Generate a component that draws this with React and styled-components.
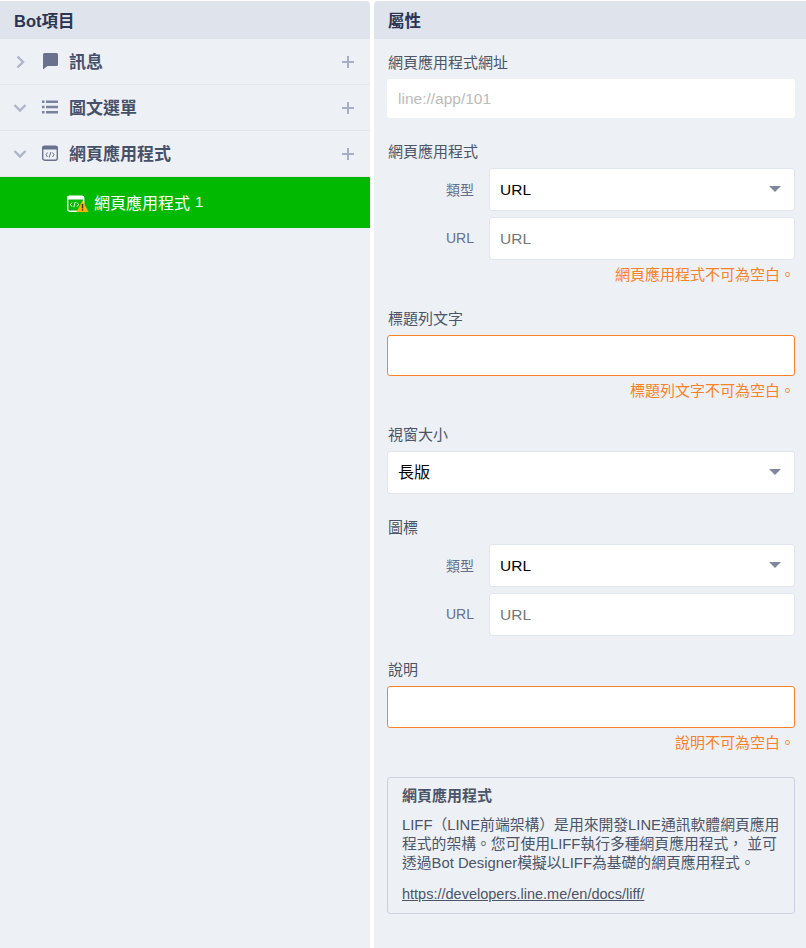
import React from "react";
import styled, { createGlobalStyle } from "styled-components";

const Global = createGlobalStyle`
  html, body { margin: 0; padding: 0; background: #fff; }
  body { font-family: "Liberation Sans", "Noto Sans CJK TC", sans-serif; }
  * { box-sizing: border-box; }
`;
const Page = styled.div`
  width: 806px; height: 948px; display: grid; grid-template-columns: 370px 432px; column-gap: 4px;
  padding-top: 1px; overflow: hidden; background: #fff;
`;
const Panel = styled.section`
  background: #edf1f5; height: 947px; overflow: hidden;
  border-radius: ${p => (p.$right ? "4px 0 0 0" : "0 4px 0 0")};
`;
const PanelHeader = styled.header`
  height: 38px; background: #dfe3ec; color: #2b3551; font-size: 16.5px; font-weight: 700;
  line-height: 41px; padding-left: 14px;
`;
const TreeRow = styled.div`
  height: 46px; border-bottom: 1px solid #e3e7ee; display: flex; align-items: center; padding: 0 15px 0 12px;
`;
const Caret = styled.svg`
  width: 16px; height: 16px; margin-right: 13px; flex: none;
`;
const TreeIcon = styled.svg`
  width: 18px; height: 18px; flex: none; margin: 0 10px 2px 0;
`;
const TreeLabel = styled.span`
  font-size: 17px; font-weight: 700; color: #475069; flex: 1; padding-bottom: 2px;
`;
const Plus = styled.svg`width: 14px; height: 14px; flex: none;`;
const SelectedRow = styled.div`
  height: 51px; background: #00b900; display: flex; align-items: center; padding: 0 0 0 67px; color: #fff;
  font-size: 16px;
`;
const LeafIcon = styled.svg`width: 22px; height: 18px; margin-right: 5px; flex: none;`;
const LeafText = styled.span`padding-bottom: 2px;`;
const LeafCount = styled.span`margin-left: 5px; font-size: 15px; padding-bottom: 2px;`;
const Form = styled.div`padding: 14px 11px 0 13px; display: flex; flex-direction: column; gap: 24px;`;
const Field = styled.div`display: flex; flex-direction: column; gap: 6px;`;
const Label = styled.div`font-size: 15px; line-height: 20px; color: #4b5469; padding-left: 1px;`;
const Input = styled.div`
  height: ${p => p.$h || 41}px; background: #fff; border-radius: 3px; font-size: 15.5px; display: flex; align-items: center;
  justify-content: space-between;
  padding: 0 13px 0 10px; border: 1px solid ${p => (p.$error ? "#fa8128" : p.$plain ? "#fff" : "#e1e5ee")};
  color: ${p => (p.$muted ? "#bbb" : p.$ph ? "#777" : "#000")};
`;
const CjkValue = styled.span`font-size: 16px; padding-bottom: 4px;`;
const Arrow = styled.i`
  width: 0; height: 0; margin-bottom: 2px;
  border-left: 6px solid transparent; border-right: 6px solid transparent; border-top: 6px solid #7f869f;
`;
const SubGrid = styled.div`
  display: grid; grid-template-columns: 87px 1fr; gap: 6px 15px; align-items: center;
`;
const SubLabel = styled.div`
  text-align: right; font-size: 14px; color: #66708a; padding-bottom: 2px;
`;
const ErrorText = styled.div`
  text-align: right; color: #fa8128; font-size: 15px; line-height: 20px; margin-top: -1px;
`;
const InfoBox = styled.div`
  height: 137px; border: 1px solid #ccd1e0; border-radius: 3px; padding: 8px 14px; color: #4b5469;
  display: flex; flex-direction: column;
`;
const InfoTitle = styled.div`font-size: 15px; font-weight: 700; line-height: 20px; margin-bottom: 10px;`;
const InfoBody = styled.div`font-size: 14.8px; line-height: 19px; width: 380px;`;
const InfoLink = styled.a`margin-top: 12px; font-size: 14.5px; line-height: 18px; color: #4b5469; text-decoration: underline;`;

const ChevronRight = () => <Caret viewBox="0 0 16 16"><path d="M5.500 2.500L11 8l-5.500 5.500" fill="none" stroke="#aeb4ca" strokeWidth="2.400" /></Caret>;
const ChevronDown = () => <Caret viewBox="0 0 16 16"><path d="M2.500 5L8 10.500 13.500 5" fill="none" stroke="#aeb4ca" strokeWidth="2.400" /></Caret>;
const PlusIcon = () => <Plus viewBox="0 0 14 14"><path d="M7 1v12M1 7h12" stroke="#a7adc6" strokeWidth="2" /></Plus>;

export default function App() {
  return (
    <>
      <Global />
      <Page>
        <Panel>
          <PanelHeader>Bot項目</PanelHeader>
          <TreeRow>
            <ChevronRight />
            <TreeIcon viewBox="0 0 18 18"><path d="M3.500 1h12A1.500 1.500 0 0 1 17 2.500v10a1.500 1.500 0 0 1-1.500 1.500H6.500L2 17.500V2.500A1.500 1.500 0 0 1 3.500 1z" fill="#69718f" /></TreeIcon>
            <TreeLabel>訊息</TreeLabel>
            <PlusIcon />
          </TreeRow>
          <TreeRow>
            <ChevronDown />
            <TreeIcon viewBox="0 0 18 18"><path d="M1 2.500h2.500v2.500H1zM5 2.500h12V5H5zM1 7.800h2.500v2.500H1zM5 7.800h12v2.500H5zM1 13h2.500v2.500H1zM5 13h12v2.500H5z" fill="#7a829e" /></TreeIcon>
            <TreeLabel>圖文選單</TreeLabel>
            <PlusIcon />
          </TreeRow>
          <TreeRow>
            <ChevronDown />
            <TreeIcon viewBox="0 0 18 18">
              <rect x="1.700" y="2.200" width="14.600" height="14" rx="2" fill="none" stroke="#69718f" strokeWidth="1.400" />
              <rect x="1.700" y="2" width="14.600" height="3.500" fill="#69718f" />
              <path d="M6.500 8.500L5 10.800 6.500 13M11.500 8.500l1.500 2.300L11.500 13M9.800 8l-1.600 5.500" fill="none" stroke="#69718f" strokeWidth="1" />
            </TreeIcon>
            <TreeLabel>網頁應用程式</TreeLabel>
            <PlusIcon />
          </TreeRow>
          <SelectedRow>
            <LeafIcon viewBox="0 0 22 18">
              <rect x="0.700" y="2.200" width="16" height="15" rx="2" fill="none" stroke="#fff" strokeWidth="1.400" />
              <rect x="0.700" y="2" width="16" height="3.500" fill="#fff" />
              <path d="M5 8.500L3.500 10.600 5 12.700M10 8.500l1.500 2.100L10 12.700M8.300 8l-1.500 5.200" fill="none" stroke="#fff" strokeWidth="1" />
              <path d="M15.500 6.500L21.500 18H9.500z" fill="#ffb000" />
              <path d="M15.500 10v4.500M15.500 15.300v1.500" stroke="#333" strokeWidth="1.400" />
            </LeafIcon>
            <LeafText>網頁應用程式</LeafText>
            <LeafCount>1</LeafCount>
          </SelectedRow>
        </Panel>
        <Panel $right>
          <PanelHeader>屬性</PanelHeader>
          <Form>
            <Field>
              <Label>網頁應用程式網址</Label>
              <Input $plain $muted $h={39}>line://app/101</Input>
            </Field>
            <Field>
              <Label>網頁應用程式</Label>
              <SubGrid>
                <SubLabel>類型</SubLabel>
                <Input $h={43}>URL<Arrow /></Input>
                <SubLabel>URL</SubLabel>
                <Input $h={43} $ph>URL</Input>
              </SubGrid>
              <ErrorText>網頁應用程式不可為空白。</ErrorText>
            </Field>
            <Field>
              <Label>標題列文字</Label>
              <Input $error />
              <ErrorText>標題列文字不可為空白。</ErrorText>
            </Field>
            <Field>
              <Label>視窗大小</Label>
              <Input $h={43}><CjkValue>長版</CjkValue><Arrow /></Input>
            </Field>
            <Field>
              <Label>圖標</Label>
              <SubGrid>
                <SubLabel>類型</SubLabel>
                <Input $h={43}>URL<Arrow /></Input>
                <SubLabel>URL</SubLabel>
                <Input $h={43} $ph>URL</Input>
              </SubGrid>
            </Field>
            <Field>
              <Label>說明</Label>
              <Input $error $h={42} />
              <ErrorText>說明不可為空白。</ErrorText>
            </Field>
            <InfoBox>
              <InfoTitle>網頁應用程式</InfoTitle>
              <InfoBody>LIFF（LINE前端架構）是用來開發LINE通訊軟體網頁應用程式的架構。您可使用LIFF執行多種網頁應用程式， 並可透過Bot Designer模擬以LIFF為基礎的網頁應用程式。</InfoBody>
              <InfoLink href="#">https://developers.line.me/en/docs/liff/</InfoLink>
            </InfoBox>
          </Form>
        </Panel>
      </Page>
    </>
  );
}
